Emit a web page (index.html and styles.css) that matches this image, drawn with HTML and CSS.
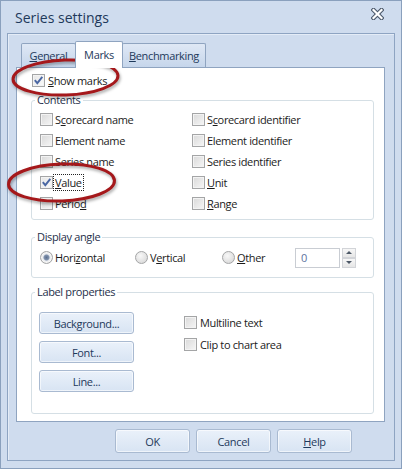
FILE: index.html
```html
<!DOCTYPE html>
<html lang="en">
<head>
    <meta charset="UTF-8">
    <title>Series settings</title>
    <link rel="stylesheet" href="styles.css">
</head>
<body>
    <div class="window">
        <!-- Title bar -->
        <div class="titlebar">
            <span class="title">Series settings</span>
            <svg class="close" width="13" height="12" viewBox="0 0 13 12">
                <path d="M2.5 2 L10.5 10 M10.5 2 L2.5 10" stroke="#4b586a" stroke-width="4.4" stroke-linecap="square"/>
                <path d="M2.5 2 L10.5 10 M10.5 2 L2.5 10" stroke="#fff" stroke-width="2.2" stroke-linecap="square"/>
            </svg>
        </div>

        <!-- Dialog frame -->
        <div class="frame">
            <div class="tabs">
                <div class="tab tab-general"><u>G</u>eneral</div>
                <div class="tab tab-marks active">Marks</div>
                <div class="tab tab-bench"><u>B</u>enchmarking</div>
            </div>

            <div class="panel">
                <div class="check show-marks">
                    <span class="box checked">
                        <svg width="11" height="11" viewBox="0 0 11 11"><path d="M1.8 5.2 L4.3 8.2 L9.3 1.8" fill="none" stroke="#4a67a3" stroke-width="1.9"/></svg>
                    </span>
                    <span><u>S</u>how marks</span>
                </div>

                <fieldset class="group contents">
                    <legend>Contents</legend>
                    <div class="contents-grid">
                        <div class="check"><span class="box"></span><span>S<u>c</u>orecard name</span></div>
                        <div class="check"><span class="box"></span><span>Element name</span></div>
                        <div class="check"><span class="box"></span><span>Series name</span></div>
                        <div class="check">
                            <span class="box checked">
                                <svg width="11" height="11" viewBox="0 0 11 11"><path d="M1.8 5.2 L4.3 8.2 L9.3 1.8" fill="none" stroke="#4a67a3" stroke-width="1.9"/></svg>
                            </span>
                            <span class="focused"><u>V</u>alue</span>
                        </div>
                        <div class="check"><span class="box"></span><span>Perio<u>d</u></span></div>
                        <div class="check"><span class="box"></span><span>S<u>c</u>orecard identifier</span></div>
                        <div class="check"><span class="box"></span><span>Element identifier</span></div>
                        <div class="check"><span class="box"></span><span>Series identifier</span></div>
                        <div class="check"><span class="box"></span><span><u>U</u>nit</span></div>
                        <div class="check"><span class="box"></span><span><u>R</u>ange</span></div>
                    </div>
                </fieldset>

                <fieldset class="group angle">
                    <legend>Display angle</legend>
                    <div class="angle-row">
                        <div class="check"><span class="radio selected"></span><span>Hori<u>z</u>ontal</span></div>
                        <div class="check"><span class="radio"></span><span>V<u>e</u>rtical</span></div>
                        <div class="check"><span class="radio"></span><span><u>O</u>ther</span></div>
                        <div class="spin">
                            <div class="spin-input">0</div>
                            <div class="spin-buttons">
                                <span class="spin-btn"><i class="arrow-up"></i></span>
                                <span class="spin-btn"><i class="arrow-down"></i></span>
                            </div>
                        </div>
                    </div>
                </fieldset>

                <fieldset class="group props">
                    <legend>Label properties</legend>
                    <div class="props-row">
                        <div class="props-buttons">
                            <button class="btn wide">Background...</button>
                            <button class="btn wide">Font...</button>
                            <button class="btn wide">Line...</button>
                        </div>
                        <div class="props-checks">
                            <div class="check"><span class="box"></span><span>Multiline text</span></div>
                            <div class="check"><span class="box"></span><span>Clip to chart area</span></div>
                        </div>
                    </div>
                </fieldset>
            </div>

            <div class="actions">
                <button class="btn">OK</button>
                <button class="btn">Cancel</button>
                <button class="btn"><u>H</u>elp</button>
            </div>
        </div>

        <!-- Red highlight rings drawn over the dialog -->
        <svg class="rings" width="402" height="469" viewBox="0 0 402 469">
            <ellipse cx="65.5" cy="77.5" rx="52.5" ry="17.5" transform="rotate(-2 65.5 77.5)"/>
            <ellipse cx="61.5" cy="182.5" rx="53" ry="18.5" transform="rotate(-2 61.5 182.5)"/>
        </svg>
    </div>
</body>
</html>
```

FILE: styles.css
```css
* {
    box-sizing: border-box;
}

body {
    margin: 0;
    font-family: 'Open Sans', 'Noto Sans', sans-serif;
    font-size: 11px;
    letter-spacing: -0.35px;
    color: #1b1b1b;
}

u {
    text-decoration-thickness: 1px;
    text-underline-offset: 1px;
}

.window {
    position: relative;
    width: 402px;
    height: 469px;
    display: flex;
    flex-direction: column;
    background: #cfdcee;
    border: 1px solid #8aa0bd;
}

/* Title bar */
.titlebar {
    height: 32px;
    display: flex;
    align-items: center;
    justify-content: space-between;
    padding: 1px 17px 0 14px;
}

.title {
    font-size: 14px;
    letter-spacing: 0;
    color: #1e395b;
}

.close {
    margin-top: -8px;
}

/* Frame */
.frame {
    flex: 1;
    display: flex;
    flex-direction: column;
    margin: 0 6px 7px 6px;
    padding-top: 7px;
    background: #cfdcee;
    border: 1px solid #8ea4c2;
    box-shadow: inset 1px 1px 0 #e4ecf7;
}

.tabs {
    display: flex;
    align-items: flex-end;
    height: 27px;
    padding-left: 13px;
}

.tab {
    height: 24px;
    margin-bottom: 1px;
    display: flex;
    align-items: center;
    justify-content: center;
    color: #1e395b;
    background: linear-gradient(#dfe8f5, #c6d6eb);
    border: 1px solid #8fa4c0;
    border-bottom: none;
    border-radius: 2px 2px 0 0;
}

.tab-general {
    width: 55px;
}

.tab-marks {
    width: 48px;
    margin-left: -1px;
}

.tab-bench {
    width: 84px;
    margin-left: -1px;
}

.tab.active {
    position: relative;
    z-index: 2;
    height: 27px;
    margin-bottom: 0;
    padding-bottom: 2px;
    background: #fff;
}

.panel {
    flex: 1;
    margin: -1px 9px 0 8px;
    background: #fff;
    border: 1px solid #8fa4c0;
}

/* Checkboxes and radios */
.check {
    display: flex;
    align-items: center;
    gap: 2px;
    white-space: nowrap;
}

.box {
    width: 13px;
    height: 13px;
    flex: none;
    display: flex;
    align-items: center;
    justify-content: center;
    border: 1px solid #a4a5a6;
    background: linear-gradient(135deg, #d9d9d9, #f6f6f6);
    box-shadow: inset 0 0 0 1px #f3f3f3;
}

.box.checked {
    background: linear-gradient(135deg, #e6e6e6, #fbfbfb);
}

.radio {
    width: 13px;
    height: 13px;
    flex: none;
    border-radius: 50%;
    border: 1px solid #a4a5a6;
    background: radial-gradient(circle at 40% 35%, #f8f8f8, #d3d3d3);
}

.radio.selected {
    background: radial-gradient(circle, #5c6f8e 0, #8193ae 2.5px, #e8eaee 3.5px, #f6f6f6 5px, #d0d0d0 6px);
}

.focused {
    outline: 1px dotted #222;
    outline-offset: 0;
    padding: 0 1px;
    margin-left: -1px;
}

.show-marks {
    height: 15px;
    margin: 5px 0 0 15px;
    gap: 3px;
}

/* Group boxes */
.group {
    min-width: 0;
    margin: 4px 10px 0 14px;
    padding: 0 0 0 3px;
    border: 1px solid #d5dfe5;
    border-radius: 3px;
}

.group legend {
    padding: 0 2px;
    line-height: 16px;
    color: #1e2f4a;
}

.contents-grid {
    display: grid;
    grid-template-columns: 152px auto;
    grid-template-rows: repeat(5, 21px);
    grid-auto-flow: column;
    margin: 1px 0 5px 5px;
}

.angle {
    margin-top: 9px;
}

.angle-row {
    display: grid;
    grid-template-columns: 95px 87px 73px auto;
    align-items: center;
    height: 21px;
    margin: 2px 0 9px 5px;
}

.spin {
    display: flex;
    gap: 2px;
}

.spin-input {
    width: 45px;
    height: 20px;
    padding: 1px 0 0 5px;
    border: 1px solid #c9cdd3;
    color: #5d74a0;
}

.spin-buttons {
    display: flex;
    flex-direction: column;
    width: 14px;
}

.spin-btn {
    height: 10px;
    display: flex;
    align-items: center;
    justify-content: center;
    border: 1px solid #d2d4d8;
    background: linear-gradient(#f7f7f7, #e6e6e6);
}

.arrow-up,
.arrow-down {
    width: 0;
    height: 0;
    border-left: 3px solid transparent;
    border-right: 3px solid transparent;
}

.arrow-up {
    border-bottom: 3px solid #4d5866;
}

.arrow-down {
    border-top: 3px solid #4d5866;
}

.props {
    margin-top: 6px;
}

.props-row {
    display: flex;
    gap: 50px;
    margin: 12px 0 21px 4px;
}

.props-buttons {
    display: flex;
    flex-direction: column;
    gap: 7px;
}

.props-checks {
    display: flex;
    flex-direction: column;
    margin-top: -1px;
}

.props-checks .check {
    height: 22px;
    gap: 3px;
}

/* Buttons */
.btn {
    width: 75px;
    height: 24px;
    padding: 0;
    font-family: inherit;
    font-size: 11px;
    letter-spacing: inherit;
    color: #1e395b;
    background: linear-gradient(#eaf1fa, #d8e4f3);
    border: 1px solid #a9bad1;
    border-radius: 3px;
    box-shadow: inset 0 0 0 1px rgba(255, 255, 255, 0.6);
}

.btn.wide {
    width: 95px;
    height: 22px;
}

.actions {
    display: flex;
    justify-content: flex-end;
    gap: 6px;
    padding: 7px 42px 7px 0;
}

/* Highlight rings */
.rings {
    position: absolute;
    top: -1px;
    left: -1px;
    pointer-events: none;
    filter: drop-shadow(1px 2px 1.5px rgba(0, 0, 0, 0.35));
}

.rings ellipse {
    fill: none;
    stroke: #a5181b;
    stroke-width: 3;
}
```
